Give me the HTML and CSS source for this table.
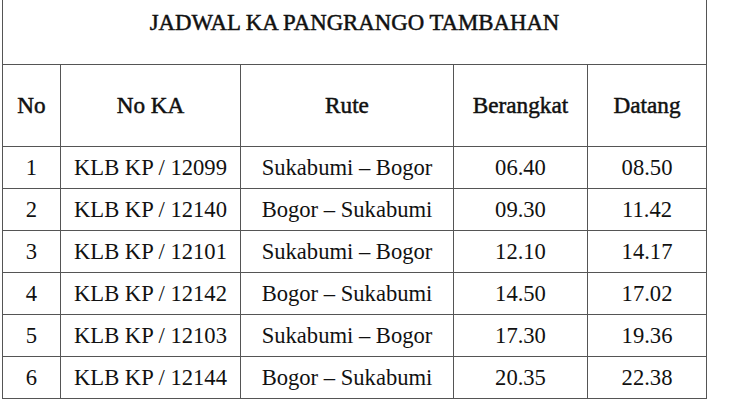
FILE: index.html
```html
<!DOCTYPE html>
<html>
<head>
<meta charset="utf-8">
<link rel="stylesheet" href="styles.css">
</head>
<body>
<table class="schedule">
  <colgroup>
    <col class="c-no">
    <col class="c-ka">
    <col class="c-rute">
    <col class="c-berangkat">
    <col class="c-datang">
  </colgroup>
  <tr class="title-row"><td colspan="5" class="title">JADWAL KA PANGRANGO TAMBAHAN</td></tr>
  <tr class="head-row">
    <th>No</th><th>No KA</th><th>Rute</th><th>Berangkat</th><th>Datang</th>
  </tr>
  <tr><td>1</td><td>KLB KP / 12099</td><td>Sukabumi – Bogor</td><td>06.40</td><td>08.50</td></tr>
  <tr><td>2</td><td>KLB KP / 12140</td><td>Bogor – Sukabumi</td><td>09.30</td><td>11.42</td></tr>
  <tr><td>3</td><td>KLB KP / 12101</td><td>Sukabumi – Bogor</td><td>12.10</td><td>14.17</td></tr>
  <tr><td>4</td><td>KLB KP / 12142</td><td>Bogor – Sukabumi</td><td>14.50</td><td>17.02</td></tr>
  <tr><td>5</td><td>KLB KP / 12103</td><td>Sukabumi – Bogor</td><td>17.30</td><td>19.36</td></tr>
  <tr><td>6</td><td>KLB KP / 12144</td><td>Bogor – Sukabumi</td><td>20.35</td><td>22.38</td></tr>
</table>
</body>
</html>
```
FILE: styles.css
```css
html, body {
  margin: 0;
  padding: 0;
  background: #ffffff;
}
body {
  padding-left: 2px;
  font-family: "Liberation Serif", "Times New Roman", serif;
  color: #111111;
}
.schedule {
  border-collapse: collapse;
  table-layout: fixed;
  width: 704px;
  font-size: 22.6px;
}
.c-no { width: 58px; }
.c-ka { width: 180px; }
.c-rute { width: 213px; }
.c-berangkat { width: 134px; }
.c-datang { width: 119px; }
.schedule td, .schedule th {
  border: 1px solid #555555;
  text-align: center;
  padding: 0;
  font-weight: normal;
  height: 41px;
}
.schedule .title {
  border-top: none;
  height: 46px;
  padding-bottom: 18px;
  font-size: 22.8px;
  -webkit-text-stroke: 0.5px #111111;
}
.head-row th {
  height: 81px;
  font-size: 23.2px;
  -webkit-text-stroke: 0.5px #111111;
}
```
